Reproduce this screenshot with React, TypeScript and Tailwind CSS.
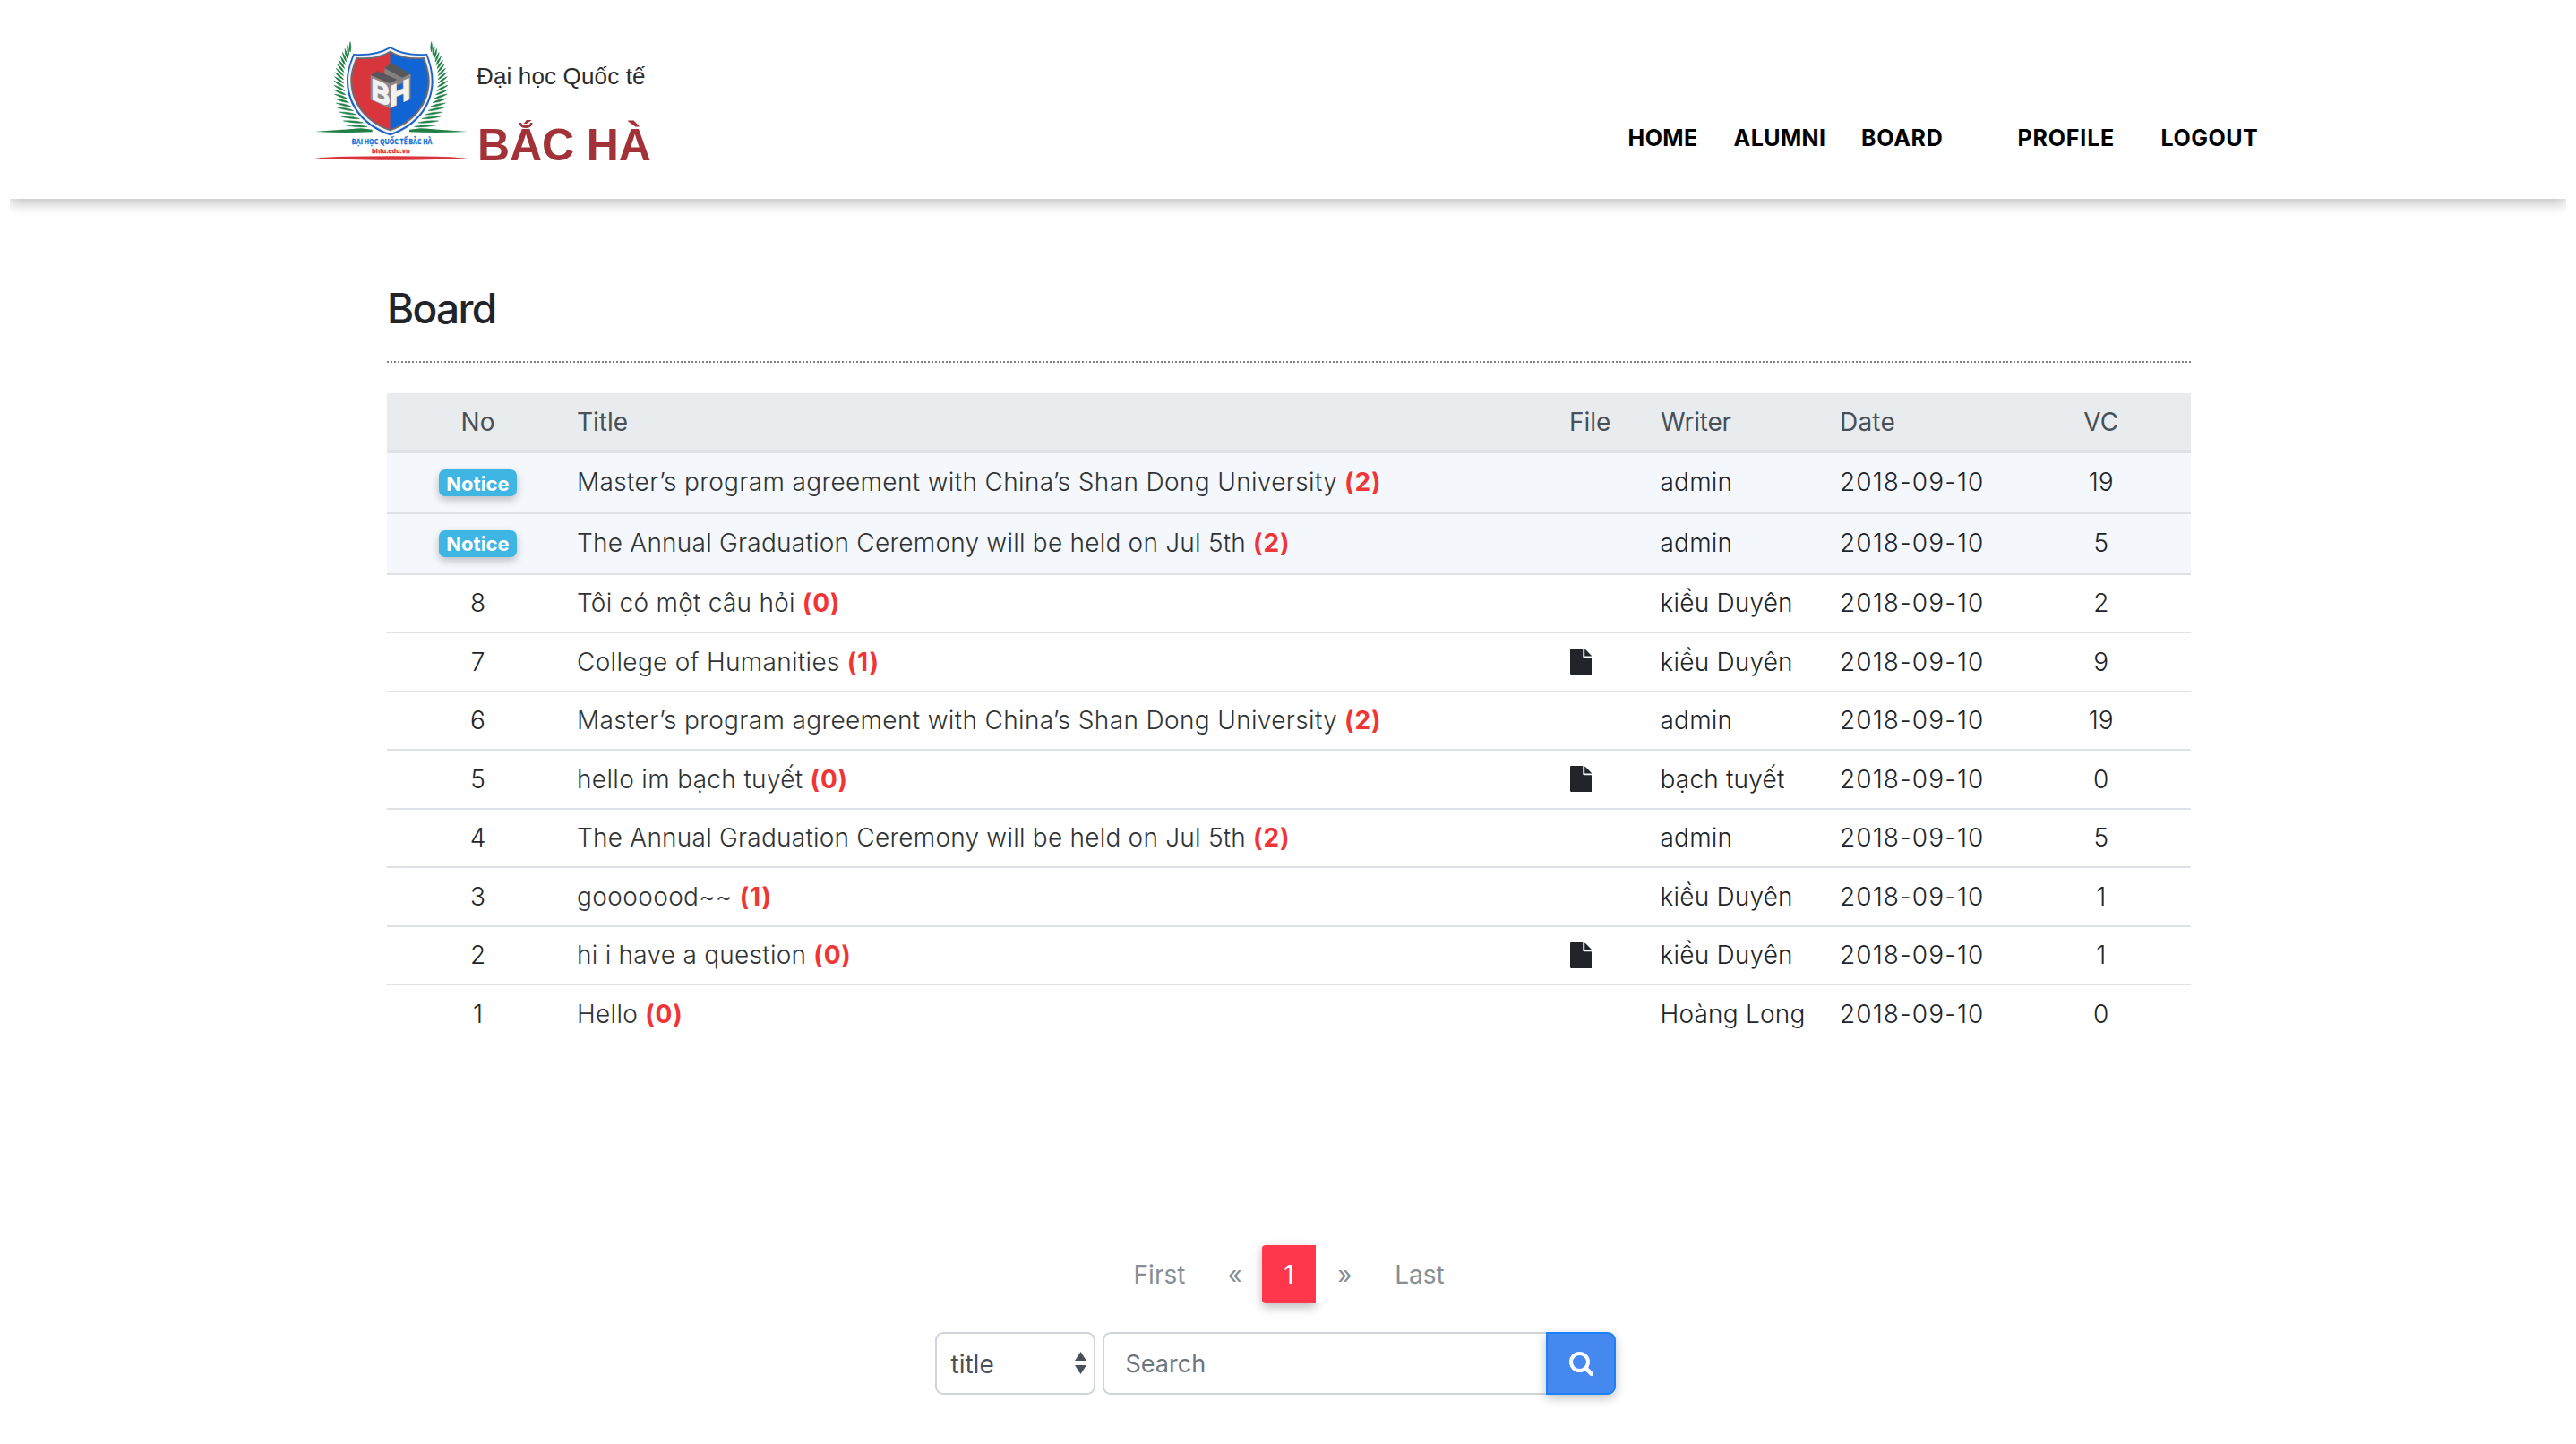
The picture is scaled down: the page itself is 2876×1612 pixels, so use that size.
import React from "react";

type Row = {
  no?: number;
  title: string;
  tracking: string;
  replies: number;
  file?: boolean;
  writer: string;
  views: number;
};

const MASTER = "Master’s program agreement with China’s Shan Dong University";
const ANNUAL = "The Annual Graduation Ceremony will be held on Jul 5th";

const ROWS: Row[] = [
  { title: MASTER, tracking: "tracking-[0.35px]", replies: 2, writer: "admin", views: 19 },
  { title: ANNUAL, tracking: "tracking-[0.23px]", replies: 2, writer: "admin", views: 5 },
  { no: 8, title: "Tôi có một câu hỏi", tracking: "tracking-[0.25px]", replies: 0, writer: "kiều Duyên", views: 2 },
  { no: 7, title: "College of Humanities", tracking: "tracking-[0.32px]", replies: 1, file: true, writer: "kiều Duyên", views: 9 },
  { no: 6, title: MASTER, tracking: "tracking-[0.35px]", replies: 2, writer: "admin", views: 19 },
  { no: 5, title: "hello im bạch tuyết", tracking: "tracking-[0.34px]", replies: 0, file: true, writer: "bạch tuyết", views: 0 },
  { no: 4, title: ANNUAL, tracking: "tracking-[0.23px]", replies: 2, writer: "admin", views: 5 },
  { no: 3, title: "gooooood~~", tracking: "tracking-[0.38px]", replies: 1, writer: "kiều Duyên", views: 1 },
  { no: 2, title: "hi i have a question", tracking: "tracking-[0.26px]", replies: 0, file: true, writer: "kiều Duyên", views: 1 },
  { no: 1, title: "Hello", tracking: "tracking-[0.3px]", replies: 0, writer: "Hoàng Long", views: 0 },
];

const COLS = "grid grid-cols-[202px_1107px_101.5px_200.5px_202.5px_1fr] items-center";

type P = [number, number];
const bez = (a: P, b: P, c: P, d: P, t: number): P => {
  const u = 1 - t;
  const f = (i: 0 | 1) =>
    u * u * u * a[i] + 3 * u * u * t * b[i] + 3 * u * t * t * c[i] + t * t * t * d[i];
  return [f(0), f(1)];
};

const LEAVES = Array.from({ length: 22 }, (_, i) => {
  const t = i / 21;
  const [ox, oy] = bez([153, 32], [84, 110], [78, 225], [148, 326], t);
  const [ix, iy] = bez([153, 66], [118, 140], [112, 235], [226, 330], t);
  const dx = ix - ox;
  const dy = iy - oy;
  const l = Math.hypot(dx, dy) || 1;
  const nx = (-dy / l) * 6;
  const ny = (dx / l) * 6;
  const mx = ox + dx * 0.6;
  const my = oy + dy * 0.6;
  return `M${ox} ${oy}Q${mx + nx} ${my + ny} ${ix} ${iy}Q${mx - nx} ${my - ny} ${ox} ${oy}Z`;
});

function Logo() {
  const leaves = LEAVES.map((d) => <path key={d} d={d} />);
  return (
    <svg viewBox="0 0 600 450" className="h-[150px] w-[200px] shrink-0">
      <g fill="#1f8045" stroke="#1f8045" strokeWidth="1.6">
        <g>{leaves}</g>
        <g transform="translate(578 0) scale(-1 1)">{leaves}</g>
        <path stroke="none" d="M35 333Q140 326 190 322L226 326L228 334Q130 338 35 333Z" />
        <path stroke="none" d="M545 333Q440 326 388 322L352 326L350 334Q450 338 545 333Z" />
      </g>
      <path
        d="M287 48Q235 78 163 72C150 105 140 135 141 165C142 250 200 318 287 346C374 318 430 250 431 165C431 135 424 105 411 72Q339 78 287 48Z"
        fill="#1b63c6"
      />
      <path
        d="M287 54Q237 83 167 77C153 110 146 138 147 165C149 246 204 312 287 339C370 312 424 246 425 165C425 138 420 110 407 77Q337 83 287 54Z"
        fill="#eef0f5"
      />
      <path
        d="M287 62Q239 90 173 84C160 115 153 140 154 165C156 242 208 305 287 331C366 305 418 242 419 165C419 140 413 115 401 84Q335 90 287 62Z"
        fill="#6c6a70"
      />
      <path d="M287 68Q241 95 178 89C165 118 159 142 160 165C162 239 212 299 287 325Z" fill="#d9353d" />
      <path d="M287 68Q333 95 396 89C408 118 413 142 413 165C411 239 362 299 287 325Z" fill="#1164d4" />
      <path d="M268 120L290 103L355 140V160L300 182L268 160Z" fill="#857f7f" />
      <path d="M268 120L290 103L355 139L329 153Z" fill="#57565a" />
      <path d="M221 144L245 130L311 159L287 172Z" fill="#57565a" />
      <path d="M221 144L287 172V256L221 226Z" fill="#8d8989" />
      <path d="M287 172L309 160V196L329 187V152L355 140V223L333 233V208L308 217V247L287 256Z" fill="#8d8989" />
      <g fontFamily="'Liberation Sans', Arial, sans-serif" fontWeight="700" fill="#f1f1f1" stroke="#f1f1f1" strokeWidth="5">
        <text transform="matrix(0.84 0.35 0 1 224 223)" fontSize="98" textLength="74" lengthAdjust="spacingAndGlyphs">
          B
        </text>
        <text transform="matrix(0.84 -0.36 0 1 285 251)" fontSize="98" textLength="82" lengthAdjust="spacingAndGlyphs">
          H
        </text>
      </g>
      <g fontFamily="'Open Sans', 'Noto Sans', sans-serif" fontWeight="700" strokeWidth="0.8">
        <text x="158" y="375" fontSize="24" fill="#1472d6" stroke="#1472d6" textLength="269" lengthAdjust="spacingAndGlyphs">
          ĐẠI HỌC QUỐC TẾ BẮC HÀ
        </text>
        <text x="225" y="405" fontSize="23" fill="#e02b38" stroke="#e02b38" textLength="128" lengthAdjust="spacingAndGlyphs">
          bhiu.edu.vn
        </text>
      </g>
      <path d="M33 421.5Q120 415 290 415Q460 415 547 421.5Q460 428 290 428Q120 428 33 421.5Z" fill="#d9343c" />
    </svg>
  );
}

function FileIcon() {
  return (
    <svg viewBox="0 0 24.6 29" className="h-[29px] w-[24.6px]" fill="#212529">
      <path d="M1.2 0H14.3V8.9Q14.3 10.2 15.6 10.2H24.6V27.8Q24.6 29 23.4 29H1.2Q0 29 0 27.8V1.2Q0 0 1.2 0Z" />
      <path d="M16.2 0.6Q17 1 17.6 1.6L23 7Q23.8 7.8 24.2 8.4H16.2Z" />
    </svg>
  );
}

function Header() {
  return (
    <div className="mx-[11px] h-[262px] overflow-hidden">
      <header className="flex h-[222px] bg-white pl-[329px] pt-9 shadow-[0_5px_14px_rgba(0,0,0,0.25)]">
        <Logo />
        <div className="-ml-[8px] w-[1285.6px] font-['Liberation_Sans',Arial,sans-serif]">
          <div className="pt-[34px] text-[26px] leading-[30px] tracking-[0.15px] text-[#2c2c2c]">Đại học Quốc tế</div>
          <div className="pt-[34px] pl-px text-[50px] leading-[56px] font-bold tracking-[-0.1px] text-[#a33238]">BẮC HÀ</div>
        </div>
        <nav className="flex pt-[103px] text-[25px] leading-[30px] font-bold text-black">
          <a className="w-[118px] tracking-[0.4px]">HOME</a>
          <a className="w-[142.5px] tracking-[0.4px]">ALUMNI</a>
          <a className="w-[174.5px] tracking-[0.7px]">BOARD</a>
          <a className="w-[160px] tracking-[0.8px]">PROFILE</a>
          <a className="tracking-[0.5px]">LOGOUT</a>
        </nav>
      </header>
    </div>
  );
}

function BoardTable() {
  return (
    <div className="mt-[34px] text-[28px] leading-[34px] font-light text-[#212529]">
      <div className={`${COLS} h-[67px] border-b-4 border-[#dee2e6] bg-[#e9ecef] font-normal text-[#495057]`}>
        <div className="pl-px text-center">No</div>
        <div className="pl-[10px]">Title</div>
        <div className="pl-[11px]">File</div>
        <div className="pl-[11.5px] tracking-[-0.2px]">Writer</div>
        <div className="pl-[11px] tracking-[0.2px]">Date</div>
        <div className="text-center">VC</div>
      </div>
      {ROWS.map((r, i) => (
        <div
          key={i}
          className={`${COLS} border-[#dee2e6] ${
            i === 0
              ? "h-[66px] bg-[#f4f7fc] pb-0.5"
              : i === 1
                ? "h-[67.5px] border-t-2 bg-[#f4f7fc] pb-0.5"
                : "h-[65.5px] border-t-2"
          }`}
        >
          <div className="flex justify-center pl-px">
            {r.no ?? (
              <span className="relative top-px flex h-[30px] w-[87px] items-center justify-center rounded-[7px] bg-[#3eb5e3] pt-px text-[22px] font-bold text-white shadow-[0_4px_10px_rgba(0,0,0,0.24)]">
                Notice
              </span>
            )}
          </div>
          <div className="flex gap-2 pl-[10px] text-[#303335]">
            <span className={r.tracking}>{r.title}</span>
            <span className="font-bold tracking-[0.8px] text-[#ef3535]">({r.replies})</span>
          </div>
          <div className="pl-[11.5px]">{r.file && <FileIcon />}</div>
          <div className="pl-[11px] tracking-[0.2px]">{r.writer}</div>
          <div className="pl-[11px] tracking-[1.1px]">2018-09-10</div>
          <div className="text-center">{r.views}</div>
        </div>
      ))}
    </div>
  );
}

function Pagination() {
  return (
    <div className="flex h-[65px] text-[28px] leading-[67px] text-[#868e96]">
      <a className="ml-[808.5px] w-[108px] text-center">First</a>
      <a className="w-[60.5px] text-center">«</a>
      <a className="w-[60px] rounded-l-[4px] bg-[#ff374c] text-center text-white shadow-[0_4px_12px_rgba(0,0,0,0.28)]">1</a>
      <a className="relative w-[65px] bg-white text-center">»</a>
      <a className="w-[102px] text-center">Last</a>
    </div>
  );
}

function SearchBar() {
  return (
    <div className="mt-8 ml-[612px] flex h-[70px] text-[28px]">
      <div className="flex w-[178.5px] items-center justify-between rounded-[9px] border-2 border-[#ced4da] pr-2 pl-[15.5px] text-[#495057]">
        <span className="pt-0.5">title</span>
        <svg viewBox="0 0 13 25" className="h-[25px] w-[13px]" fill="#495057">
          <path d="M6.5 0L13 10H0ZM0 15H13L6.5 25Z" />
        </svg>
      </div>
      <div className="ml-2 flex w-[496.5px] items-center rounded-l-[9px] border-2 border-r-0 border-[#ced4da] pt-[3px] pl-[24px] text-[27px] text-[#6c757d]">
        Search
      </div>
      <button className="-ml-px flex w-[78px] items-center justify-center rounded-r-[9px] border-2 border-[#1a80fb] bg-[#4488f0] shadow-[0_4px_12px_rgba(0,0,0,0.24)]">
        <svg viewBox="0 0 27 27" className="mt-0.5 ml-px h-[27px] w-[27px]" fill="none" stroke="#fff">
          <circle cx="11.5" cy="11.5" r="9.5" strokeWidth="4" />
          <path d="M18.5 18.5L24.7 24.7" strokeWidth="4.6" strokeLinecap="round" />
        </svg>
      </button>
    </div>
  );
}

export default function App() {
  return (
    <div className="h-[1612px] w-[2876px] overflow-hidden bg-white font-['Inter','Noto_Sans',sans-serif]">
      <Header />
      <main className="ml-[432px] w-[2014px]">
        <h1 className="mt-[54px] h-[87px] text-[46px] leading-[56px] font-medium tracking-[-1.7px] text-[#212529]">Board</h1>
        <div className="border-t-2 border-dotted border-[#808080]" />
        <BoardTable />
        <div className="h-[226px]" />
        <Pagination />
        <SearchBar />
      </main>
    </div>
  );
}
